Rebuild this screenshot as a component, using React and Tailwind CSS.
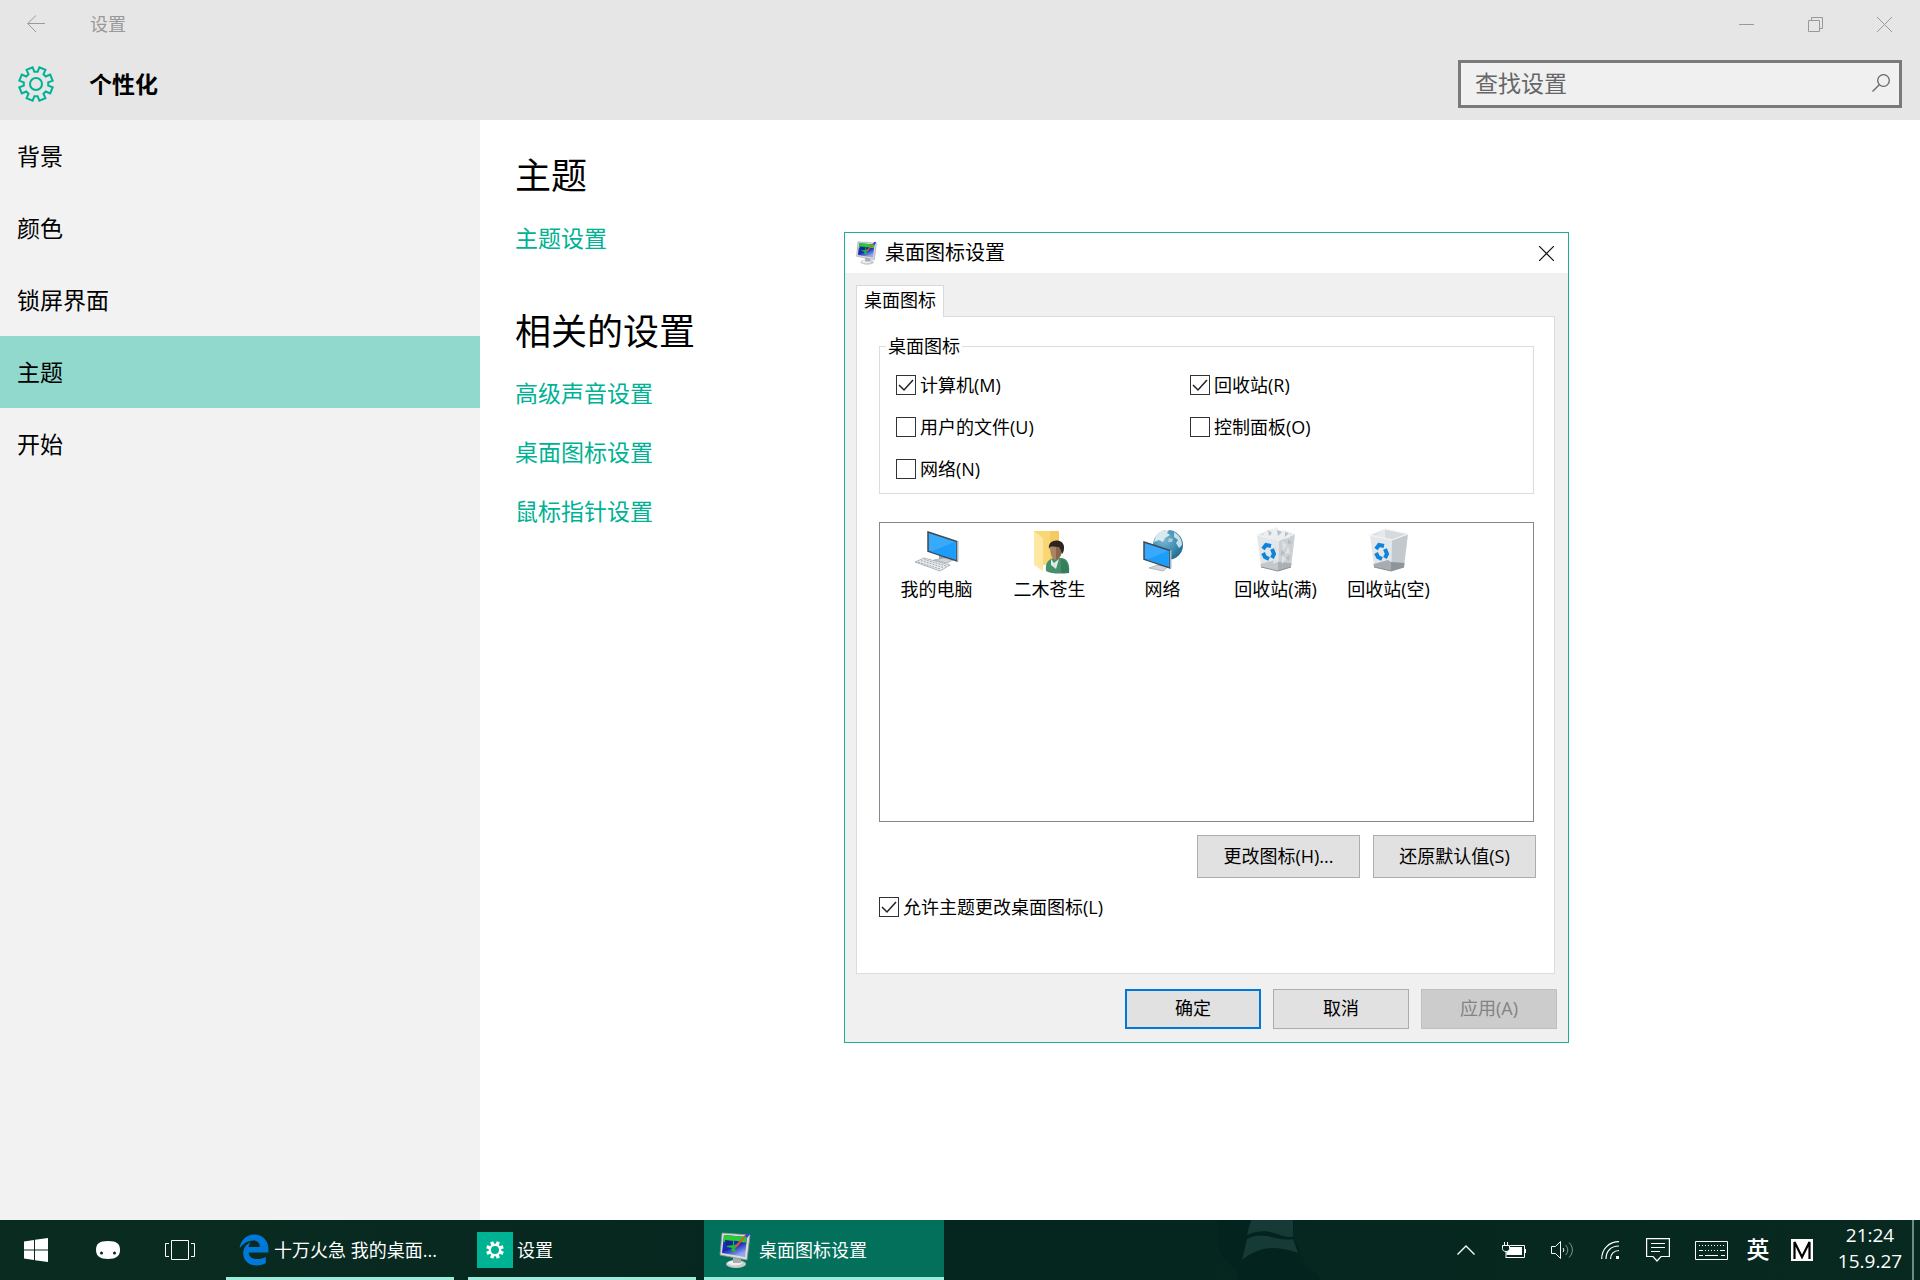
import React, { useState } from "react";
import { FaEdgeLegacy } from "react-icons/fa6";

const NAV_ITEMS = ["背景", "颜色", "锁屏界面", "主题", "开始"];
const RELATED_LINKS = ["高级声音设置", "桌面图标设置", "鼠标指针设置"];

// Outline of an eight-toothed gear centred on 0,0
function gearPath(outer, inner) {
  const points = [];
  for (let i = 0; i < 8; i++) {
    const mid = 22.5 + i * 45;
    [
      [mid - 15, inner],
      [mid - 11, outer],
      [mid + 11, outer],
      [mid + 15, inner],
    ].forEach(([deg, r]) => {
      const a = (deg * Math.PI) / 180;
      points.push(`${(r * Math.sin(a)).toFixed(2)} ${(-r * Math.cos(a)).toFixed(2)}`);
    });
  }
  return `M${points.join("L")}Z`;
}

function GearIcon({ className }) {
  return (
    <svg viewBox="-18 -18 36 36" className={className} fill="none" stroke="currentColor" strokeWidth="2">
      <path d={gearPath(17, 12.3)} />
      <circle r="6" />
    </svg>
  );
}

function SolidGearIcon({ className }) {
  return (
    <svg viewBox="-18 -18 36 36" className={className} fill="currentColor" fillRule="evenodd">
      <path d={`${gearPath(18, 12.5)}M-8 0a8 8 0 1 0 16 0a8 8 0 1 0 -16 0z`} />
    </svg>
  );
}

function DisplayIcon({ className }) {
  return (
    <svg viewBox="0 0 32 36" className={className}>
      <defs>
        <linearGradient id="screen" x1="0" y1="0" x2="0.5" y2="1">
          <stop offset="0" stopColor="#1a3fd0" />
          <stop offset="0.6" stopColor="#1626b4" />
          <stop offset="1" stopColor="#8fa8f0" />
        </linearGradient>
      </defs>
      <ellipse cx="17" cy="32" rx="10" ry="4" fill="#c9cccb" />
      <ellipse cx="16" cy="31" rx="7" ry="2.500" fill="#efefef" />
      <path d="M14 25l8 2v4h-8z" fill="#a9adac" />
      <path d="M3 1L31 3L28 28L1 23Z" fill="#d9dcdb" stroke="#8d9391" strokeWidth="0.8" />
      <path d="M5 3L28 5L26 25L3 21Z" fill="url(#screen)" />
      <path d="M5 3L28 5L27.500 10C23 12 19 8 14 9C10 10 7 9 4.500 10Z" fill="#2ccb32" />
      <path d="M6 8h9v5l4 -1l-3 5l1 3l-5 -1l1 -3l-5 -1z" fill="#22b83a" />
      <path d="M6 8l8 1v4l-7 1z" fill="#0c2796" />
      <path d="M29 2L18 15l-2 1l1 -3L26 3z" fill="#e0542c" />
      <path d="M28 1l3 1l-3 4l-2 -2z" fill="#3346d8" />
    </svg>
  );
}

function Screen({ x, y, w, h }) {
  return (
    <g transform={`translate(${x} ${y})`}>
      <path d={`M0 0L${w} ${h * 0.33}V${h}L0 ${h * 0.66}Z`} fill="#38a9fb" stroke="#3f4a54" strokeWidth="1.500" />
      <path d={`M${w * 0.1} ${h * 0.68}L${w * 0.95} ${h * 0.34}V${h * 0.94}Z`} fill="#1c9dfa" />
      <path d={`M${w} ${h * 0.33}l1.500 -0.500V${h}l-1.500 0.500z`} fill="#b3b9bd" />
    </g>
  );
}

function ComputerIcon() {
  return (
    <svg viewBox="0 0 48 48" className="size-12">
      <path d="M26 29l7 2v4h-7z" fill="#9aa4aa" />
      <path d="M21 34l10 -2l9 2l-6 3z" fill="#cfd5d9" stroke="#9ba5ab" strokeWidth="0.7" />
      <Screen x={15} y={6} w={29} h={29} />
      <path d="M2 36l9 -4l26 7l-10 6z" fill="#e9ecee" stroke="#8f999f" strokeWidth="0.7" />
      <path d="M5 36l22 7M8 34.500l22 7M11 33.500l22 6.500" stroke="#98a2a8" strokeWidth="0.9" strokeDasharray="2 1" />
    </svg>
  );
}

function UserFolderIcon() {
  return (
    <svg viewBox="0 0 48 48" className="size-12">
      <path d="M8 5h25v34H16z" fill="#f8d775" />
      <path d="M24 5h9v34h-9z" fill="#f3cb62" />
      <path d="M8 5l9 7v33l-9 -6z" fill="#fde7a2" />
      <path d="M20 45c-1 -9 3 -12 8 -13l8 0c5 1 8 5 7 15c-8 1 -18 1 -23 -2z" fill="#43906a" />
      <path d="M35 33c5 1 8 5 8 14l-8 0z" fill="#347e5b" />
      <path d="M25 33l3 4l5 -4l-3 10l-5 -4z" fill="#e1e6e6" />
      <path d="M24 20c0 -5 12 -5 12 1c0 6 -1 11 -6 13c-4 0 -6 -7 -6 -14z" fill="#a98465" />
      <path d="M30 21h6c0 6 -1 11 -6 13z" fill="#8a6647" />
      <path d="M23 23c-2 -11 16 -11 15 -1c0 3 -1 5 -2 6c-1 -2 -1 -5 -3 -7c-4 0 -7 -1 -9 0z" fill="#2b2422" />
    </svg>
  );
}

function NetworkIcon() {
  return (
    <svg viewBox="0 0 48 48" className="size-12">
      <defs>
        <radialGradient id="globe" cx="0.35" cy="0.3" r="0.8">
          <stop offset="0" stopColor="#7fb9d2" />
          <stop offset="0.6" stopColor="#3c8cb2" />
          <stop offset="1" stopColor="#1f6288" />
        </radialGradient>
      </defs>
      <circle cx="29" cy="19" r="15" fill="url(#globe)" />
      <path d="M17 10c4 -6 10 -6 13 -6l-2 3l3 2l-5 3l-2 4l-4 -2l-5 2z" fill="#d8e9ef" />
      <path d="M35 6c5 3 8 7 8 13l-3 3l-3 -5l2 -3l-4 -3z" fill="#c8e0ea" />
      <path d="M30 12l4 1l-1 3l-4 0z" fill="#a9cedd" />
      <path d="M20 35l5 1v4h-5z" fill="#9aa4aa" />
      <path d="M10 42l9 -3l10 2l-5 4z" fill="#cfd5d9" stroke="#9ba5ab" strokeWidth="0.7" />
      <Screen x={5} y={16} w={26} h={26} />
    </svg>
  );
}

function RecycleBinIcon({ full }) {
  return (
    <svg viewBox="0 0 48 48" className="size-12">
      <path d="M5 9L27 14L26 45L9 41Z" fill="#e4e7ea" />
      <path d="M27 14L43 8L39 41L26 45Z" fill={full ? "#cbd0d4" : "#c3c9cd"} />
      <path d="M5 9L20 3L43 8L27 14Z" fill="#d6dadd" />
      <path d="M20 3L20 12L9 10Z" fill="#e6e9eb" />
      <path d="M8.500 38L23 34L26 36V45L9 41Z" fill={full ? "#c3c8cc" : "#a6acb1"} />
      <path d="M26 36L39.500 37L39 41L26 45Z" fill={full ? "#aab1b6" : "#8d959b"} />
      <path d="M9 41L26 45L39 41" fill="none" stroke="#8a9095" />
      <path d="M5 9L20 3L43 8L27 14Z" fill="none" stroke="#f4f5f6" strokeWidth="1.200" />
      {full && (
        <>
          <path d="M11 10l3 -6l6 1l4 -4l4 4l6 -1l5 5l-2 3l-6 1l-4 2l-8 -2z" fill="#eceeef" />
          <path d="M16 4l4 3l-3 3zM25 4l5 2l-4 4zM33 6l4 1l-4 4z" fill="#b9c0c5" />
          <path d="M30 15l5 4l-4 5zM36 20l2 7l-5 1zM24 18l2 6l-5 -1zM30 29l4 4l-4 5zM22 31l4 5l-5 2z" fill="#dfe3e6" />
          <path d="M36 13l4 4l-4 1zM29 24l4 3l-4 3zM34 32l4 -3l-1 6z" fill="#b5bcc1" />
        </>
      )}
      <g fill="none" stroke="#0e84dc" strokeWidth="4">
        <path d="M11 23l3 -4l5 1" />
        <path d="M20 23l2 5l-2 4" />
        <path d="M17 33l-4 -2l-2 -4" />
      </g>
    </svg>
  );
}

const DESKTOP_ICONS = [
  { label: "我的电脑", icon: <ComputerIcon /> },
  { label: "二木苍生", icon: <UserFolderIcon /> },
  { label: "网络", icon: <NetworkIcon /> },
  { label: "回收站(满)", icon: <RecycleBinIcon full /> },
  { label: "回收站(空)", icon: <RecycleBinIcon /> },
];

function CheckOption({ label, defaultChecked = false }) {
  const [checked, setChecked] = useState(defaultChecked);
  return (
    <label className="flex h-[42px] items-center gap-1 text-lg leading-6">
      <span className="grid size-5 shrink-0">
        <input
          type="checkbox"
          checked={checked}
          onChange={(e) => setChecked(e.target.checked)}
          className="col-start-1 row-start-1 size-5 appearance-none border border-[#333333] bg-white"
        />
        {checked && (
          <svg viewBox="0 0 20 20" className="pointer-events-none col-start-1 row-start-1 size-5" fill="none" stroke="#222" strokeWidth="1.500">
            <path d="M3 10l5 5l9 -10" />
          </svg>
        )}
      </span>
      {label}
    </label>
  );
}

function DialogButton({ children, className }) {
  return (
    <button type="button" className={`border border-[#adadad] bg-[#e1e1e1] pb-0.5 text-lg leading-6 ${className}`}>
      {children}
    </button>
  );
}

function SettingsHeader() {
  const captionButton = "flex w-[69px] items-center justify-center";
  return (
    <header className="bg-[#e6e6e6] text-black">
      <div className="flex h-12 pr-px text-[#999999]">
        <button type="button" aria-label="返回" className="flex w-[72px] items-center justify-center">
          <svg viewBox="0 0 18 18" className="size-[18px]" fill="none" stroke="currentColor">
            <path d="M18 8.500H0.700M9 0.500L0.700 8.500L9 17" />
          </svg>
        </button>
        <span className="flex flex-1 items-center pl-[18px] text-lg leading-6">设置</span>
        <button type="button" aria-label="最小化" className={captionButton}>
          <svg viewBox="0 0 15 15" className="size-[15px]" stroke="currentColor">
            <path d="M0 7.500h15" />
          </svg>
        </button>
        <button type="button" aria-label="还原" className={captionButton}>
          <svg viewBox="0 0 15 15" className="size-[15px]" fill="none" stroke="currentColor">
            <path d="M0.500 3.500h11v11h-11zM3.500 3.500v-3h11v11h-3" />
          </svg>
        </button>
        <button type="button" aria-label="关闭" className={captionButton}>
          <svg viewBox="0 0 15 15" className="size-[15px]" stroke="currentColor">
            <path d="M0 0l15 15M15 0l-15 15" />
          </svg>
        </button>
      </div>
      <div className="flex h-[72px] items-center px-[18px]">
        <GearIcon className="size-9 text-[#00b294]" />
        <h1 className="flex-1 pl-[35px] text-[23px] leading-8 font-bold">个性化</h1>
        <div className="flex h-12 w-[444px] items-center border-3 border-[#7a7a7a] bg-[#f0f0f0] pr-[9px] pb-0.5 pl-3.5">
          <input
            type="text"
            aria-label="查找设置"
            placeholder="查找设置"
            className="min-w-0 flex-1 text-[23px] leading-8 outline-none placeholder:text-[#666666]"
          />
          <svg viewBox="0 0 18 18" className="size-[18px]" fill="none" stroke="#666666" strokeWidth="1.300">
            <circle cx="11.500" cy="6.500" r="5.800" />
            <path d="M7.300 10.700L0.500 17.500" />
          </svg>
        </div>
      </div>
    </header>
  );
}

function ThemePage() {
  const link = "block w-fit text-[23px] leading-8 text-[#00b294]";
  return (
    <main className="flex-1 bg-white px-[35px] pt-8">
      <h2 className="text-4xl leading-12">主题</h2>
      <a href="#theme" className={`mt-[22px] ${link}`}>主题设置</a>
      <h2 className="mt-[54px] text-4xl leading-12">相关的设置</h2>
      <div className="mt-[21px] flex flex-col gap-[27px]">
        {RELATED_LINKS.map((item) => (
          <a key={item} href="#related" className={link}>{item}</a>
        ))}
      </div>
    </main>
  );
}

function IconSettingsDialog() {
  return (
    <section
      role="dialog"
      aria-label="桌面图标设置"
      className="absolute top-[232px] left-[844px] w-[725px] border border-[#18b09a] bg-[#f0f0f0] text-black"
    >
      <div className="flex h-10 items-center bg-white pr-[14px] pl-[11px]">
        <DisplayIcon className="h-6 w-[21px]" />
        <h2 className="flex-1 pl-2 text-xl leading-6">桌面图标设置</h2>
        <button type="button" aria-label="关闭">
          <svg viewBox="0 0 15 15" className="size-[15px]" stroke="#111" strokeWidth="1.200">
            <path d="M0 0l15 15M15 0l-15 15" />
          </svg>
        </button>
      </div>

      <div className="pt-3 pr-[13px] pl-[11px]">
        <button
          type="button"
          role="tab"
          aria-selected="true"
          className="relative -mb-px block h-8 w-[88px] border border-b-0 border-[#d9d9d9] bg-white pb-1 text-lg leading-6"
        >
          桌面图标
        </button>
        <div className="border border-[#dcdcdc] bg-white pt-[17px] pr-5 pb-[45px] pl-[22px]">
          <fieldset className="border border-[#dcdcdc]">
            <legend className="ml-1.5 px-0.5 text-lg leading-6">桌面图标</legend>
            <div className="grid grid-cols-[294px_1fr] pt-1.5 pb-[3px] pl-4">
              <CheckOption label="计算机(M)" defaultChecked />
              <CheckOption label="回收站(R)" defaultChecked />
              <CheckOption label="用户的文件(U)" />
              <CheckOption label="控制面板(O)" />
              <CheckOption label="网络(N)" />
            </div>
          </fieldset>

          <ul className="mt-7 flex h-[300px] items-start border border-[#828790] pt-[3px]">
            {DESKTOP_ICONS.map((item) => (
              <li key={item.label} className="flex w-[113px] flex-col items-center gap-[3px] text-lg leading-6">
                {item.icon}
                {item.label}
              </li>
            ))}
          </ul>

          <div className="mt-[13px] -mr-0.5 flex justify-end gap-[13px]">
            <DialogButton className="h-[43px] w-[163px]">更改图标(H)...</DialogButton>
            <DialogButton className="h-[43px] w-[163px]">还原默认值(S)</DialogButton>
          </div>
          <div className="mt-2 flex">
            <CheckOption label="允许主题更改桌面图标(L)" defaultChecked />
          </div>
        </div>
      </div>

      <div className="flex justify-end gap-3 pt-[15px] pr-[11px] pb-[13px]">
        <button type="button" className="h-10 w-[136px] border-2 border-[#0078d7] bg-[#e1e1e1] pb-0.5 text-lg leading-6">
          确定
        </button>
        <DialogButton className="h-10 w-[136px]">取消</DialogButton>
        <button
          type="button"
          disabled
          className="h-10 w-[136px] border border-[#bfbfbf] bg-[#cccccc] pb-0.5 text-lg leading-6 text-[#838383]"
        >
          应用(A)
        </button>
      </div>
    </section>
  );
}

function TaskButton({ children, className }) {
  return (
    <button
      type="button"
      className={`flex h-full items-center border-b-3 border-[#9cecdc] pt-0.5 text-lg leading-6 whitespace-nowrap ${className}`}
    >
      {children}
    </button>
  );
}

function TrayIcon({ label, className = "w-12", children }) {
  return (
    <button type="button" aria-label={label} className={`flex h-full items-center justify-center ${className}`}>
      {children}
    </button>
  );
}

function Taskbar() {
  return (
    <footer className="relative flex h-[60px] items-center overflow-hidden bg-linear-to-r from-[#0a2c20] via-[#04261f] to-[#08291f] text-white">
      {/* Wallpaper showing through the bar */}
      <svg viewBox="0 0 110 60" className="pointer-events-none absolute top-0 left-[1210px] h-[60px] w-[110px]">
        <path d="M8 0C4 30 12 42 27 48V60H110C108 52 103 50 96 48C92 40 92 30 84 20V0Z" fill="#03231f" />
        <path d="M41 0H83V17C68 18 60 5 37 15Z" fill="#163b36" />
        <path d="M37 19C55 10 64 22 83 19L88 33C66 26 52 25 32 40Z" fill="#163b36" />
      </svg>

      <button type="button" aria-label="开始" className="flex h-full w-[72px] items-center justify-center">
        <svg viewBox="0 0 24 24" className="size-6" fill="white">
          <path d="M0 3.400L10 2v9.500H0zM11 1.800L24 0v11.500H11zM0 12.500h10V22L0 20.600zM11 12.500h13V24L11 22.200z" />
        </svg>
      </button>
      <button type="button" aria-label="小娜" className="flex h-full w-[72px] items-center justify-center">
        <svg viewBox="0 0 24 18" className="h-[18px] w-6">
          <path d="M12 0C21 0 24 3 24 9S20 18 12 18S0 15 0 9S3 0 12 0Z" fill="white" />
          <circle cx="5.500" cy="12" r="1.500" fill="#04261f" />
          <circle cx="18.500" cy="12" r="1.500" fill="#04261f" />
        </svg>
      </button>
      <button type="button" aria-label="任务视图" className="flex h-full w-[72px] items-center justify-center">
        <svg viewBox="0 0 30 20" className="h-5 w-[30px]" fill="none" stroke="white">
          <path d="M6.500 0.500h17v19h-17zM4 3.500H0.500v13H4M26 3.500h3.500v13H26" />
        </svg>
      </button>

      <TaskButton className="ml-2.5 w-[228px] pl-3">
        <FaEdgeLegacy className="size-8 text-[#0078d7]" />
        <span className="pl-1">十万火急 我的桌面...</span>
      </TaskButton>
      <TaskButton className="ml-3.5 w-[228px] pl-[9px]">
        <span className="flex size-9 items-center justify-center bg-[#00b294]">
          <SolidGearIcon className="size-[18px]" />
        </span>
        <span className="pl-1">设置</span>
      </TaskButton>
      <TaskButton className="ml-2 w-[240px] bg-[#03705c] pl-[15px]">
        <DisplayIcon className="h-9 w-8" />
        <span className="pl-2">桌面图标设置</span>
      </TaskButton>

      <div className="ml-auto flex h-full items-center">
        <TrayIcon label="显示隐藏的图标">
          <svg viewBox="0 0 18 10" className="h-2.5 w-[18px]" fill="none" stroke="white" strokeWidth="1.400">
            <path d="M0.500 9.500L9 1L17.500 9.500" />
          </svg>
        </TrayIcon>
        <TrayIcon label="电池">
          <svg viewBox="0 0 24 16" className="h-4 w-6" fill="none" stroke="white">
            <path d="M8 3.500h14.500v12H4M23.500 7v4" />
            <path d="M8 5h12v8H4.500V10L7 8z" fill="white" stroke="none" />
            <path d="M2.500 0v3M5.500 0v3M0.500 3.500h7v3c0 2 -1.500 3 -3.500 3s-3.500 -1 -3.500 -3zM4 9.500V16" fill="#04261f" />
          </svg>
        </TrayIcon>
        <TrayIcon label="音量">
          <svg viewBox="0 0 22 18" className="h-[18px] w-[22px]" fill="none" stroke="white">
            <path d="M0.500 5.500h4l5 -5v17l-5 -5h-4zM12 7c1 1 1 3 0 4" />
            <path d="M14.500 4c3 3 3 7 0 10M18 1.500c4.500 4 4.500 11 0 15" opacity="0.500" />
          </svg>
        </TrayIcon>
        <TrayIcon label="网络">
          <svg viewBox="0 0 18 18" className="size-[18px]" fill="none" stroke="white" strokeWidth="1.200">
            <path d="M0.700 18C0.700 8 8 0.700 18 0.700M5 18C5 10 10 5 18 5M9.500 18C9.500 13 13 9.500 18 9.500" />
            <path d="M15 15h3v3h-3z" fill="white" stroke="none" />
          </svg>
        </TrayIcon>
        <TrayIcon label="操作中心">
          <svg viewBox="0 0 24 24" className="size-6" fill="none" stroke="white" strokeWidth="1.200">
            <path d="M0.600 0.600h22.800v17.900H15L11 23L7 18.500H0.600zM5 5.500h14M5 9.500h14M5 13.500h9" />
          </svg>
        </TrayIcon>
        <TrayIcon label="触摸键盘" className="w-[58px]">
          <svg viewBox="0 0 33 19" className="h-[19px] w-[33px]" fill="none" stroke="white">
            <path d="M0.500 0.500h32v18h-32z" />
            <path d="M4 4.500h26M4 9.500h26" strokeDasharray="1 2" />
            <path d="M4 9.500h4M26 9.500h4M4 14.500h4M10 14.500h13M26 14.500h4" />
          </svg>
        </TrayIcon>
        <button type="button" className="h-full w-9 pb-0.5 text-[23px] leading-8 font-medium">英</button>
        <TrayIcon label="输入法模式" className="w-[52px]">
          <svg viewBox="0 0 22 22" className="size-[22px]">
            <path d="M0 0h22v22H0z" fill="white" />
            <path d="M3.500 20V3L11 18L18.500 3V20" fill="none" stroke="black" strokeWidth="2.200" />
          </svg>
        </TrayIcon>
        <div className="w-[84px] pb-1 text-center text-[19px] leading-[26px] whitespace-nowrap">
          <div>21:24</div>
          <div>15.9.27</div>
        </div>
        <button type="button" aria-label="显示桌面" className="h-[60px] w-2 border-l-2 border-[#6f8a82]" />
      </div>
    </footer>
  );
}

export default function App() {
  const [active, setActive] = useState("主题");

  return (
    <div className="relative flex min-h-screen flex-col bg-white font-['Open_Sans','Noto_Sans_CJK_SC',sans-serif] text-black">
      <SettingsHeader />
      <div className="flex flex-1">
        <nav className="w-[480px] bg-[#f2f2f2]">
          {NAV_ITEMS.map((item) => (
            <button
              key={item}
              type="button"
              onClick={() => setActive(item)}
              className={`flex h-[72px] w-full items-center px-[17px] text-[23px] leading-8 ${
                active === item ? "bg-[#90d9cc]" : ""
              }`}
            >
              {item}
            </button>
          ))}
        </nav>
        <ThemePage />
      </div>
      <Taskbar />
      <IconSettingsDialog />
    </div>
  );
}
